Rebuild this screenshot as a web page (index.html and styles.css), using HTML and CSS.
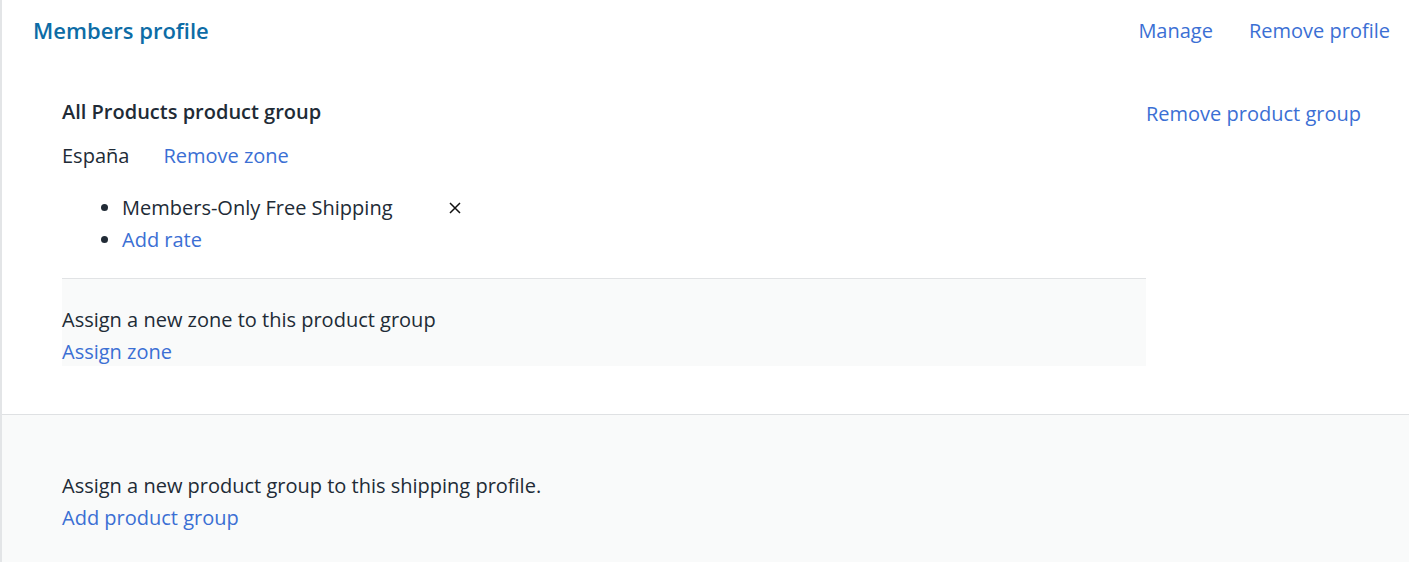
FILE: index.html
```html
<!DOCTYPE html>
<html lang="en">
<head>
<meta charset="utf-8">
<title>Members profile</title>
<link rel="stylesheet" href="styles.css">
</head>
<body>
<div class="profile">
  <div class="profile-header">
    <h2 class="profile-title">Members profile</h2>
    <div class="header-actions">
      <a class="link" href="#">Manage</a>
      <a class="link" href="#">Remove profile</a>
    </div>
  </div>

  <div class="group">
    <div class="group-main">
      <h3 class="group-title">All Products product group</h3>
      <div class="zone-row">
        <span class="zone-name">España</span>
        <a class="link" href="#">Remove zone</a>
      </div>
      <ul class="rates">
        <li class="rate"><span class="rate-name">Members-Only Free Shipping</span><button class="rate-remove" type="button" aria-label="Remove rate"><svg width="12" height="12" viewBox="0 0 12 12"><path d="M1 1L11 11M11 1L1 11" stroke="#111" stroke-width="1.5" fill="none"/></svg></button></li>
        <li class="rate"><a class="link" href="#">Add rate</a></li>
      </ul>
      <div class="assign-box">
        <div>Assign a new zone to this product group</div>
        <a class="link" href="#">Assign zone</a>
      </div>
    </div>
    <div class="group-side">
      <a class="link" href="#">Remove product group</a>
    </div>
  </div>

  <div class="footer">
    <div>Assign a new product group to this shipping profile.</div>
    <a class="link" href="#">Add product group</a>
  </div>
</div>
</body>
</html>
```

FILE: styles.css
```css
* { box-sizing: border-box; }
html, body {
  margin: 0;
  padding: 0;
  background: #fff;
}
body {
  font-family: "Open Sans", "Noto Sans", sans-serif;
  font-size: 20px;
  line-height: 32px;
  color: #212b36;
}
.profile {
  border-left: 2px solid #e3e5e7;
  min-height: 562px;
  display: flex;
  flex-direction: column;
}
.link {
  color: #3b6fd4;
  text-decoration: none;
}
.profile-header {
  display: flex;
  justify-content: space-between;
  align-items: flex-start;
  padding: 15px 19px 0 31px;
}
.profile-title {
  margin: 0;
  font-size: 22px;
  font-weight: 600;
  line-height: 30px;
  color: #0d6ca6;
}
.header-actions {
  display: flex;
  gap: 36px;
}
.group {
  display: flex;
  padding: 49px 48px 48px 60px;
}
.group-main {
  flex: 1;
}
.group-side {
  width: 215px;
  padding-top: 2px;
}
.group-title {
  margin: 0;
  font-size: 20px;
  font-weight: 600;
  line-height: 32px;
}
.zone-row {
  display: flex;
  gap: 34px;
  margin-top: 12px;
}
.rates {
  margin: 20px 0 0;
  padding-left: 60px;
}
.rate-name {
  display: inline-block;
  width: 327px;
}
.rate-remove {
  border: 0;
  background: none;
  padding: 0;
  margin: 0;
  cursor: pointer;
  vertical-align: middle;
  line-height: 0;
  position: relative;
  top: -2px;
}
.assign-box {
  margin-top: 22px;
  height: 88px;
  border-top: 1px solid #e1e3e5;
  background: #f9fafa;
  padding: 25px 0 0;
}
.footer {
  flex: 1;
  border-top: 1px solid #dfe1e3;
  background: #f9fafa;
  padding: 55px 60px 28px;
}
```
